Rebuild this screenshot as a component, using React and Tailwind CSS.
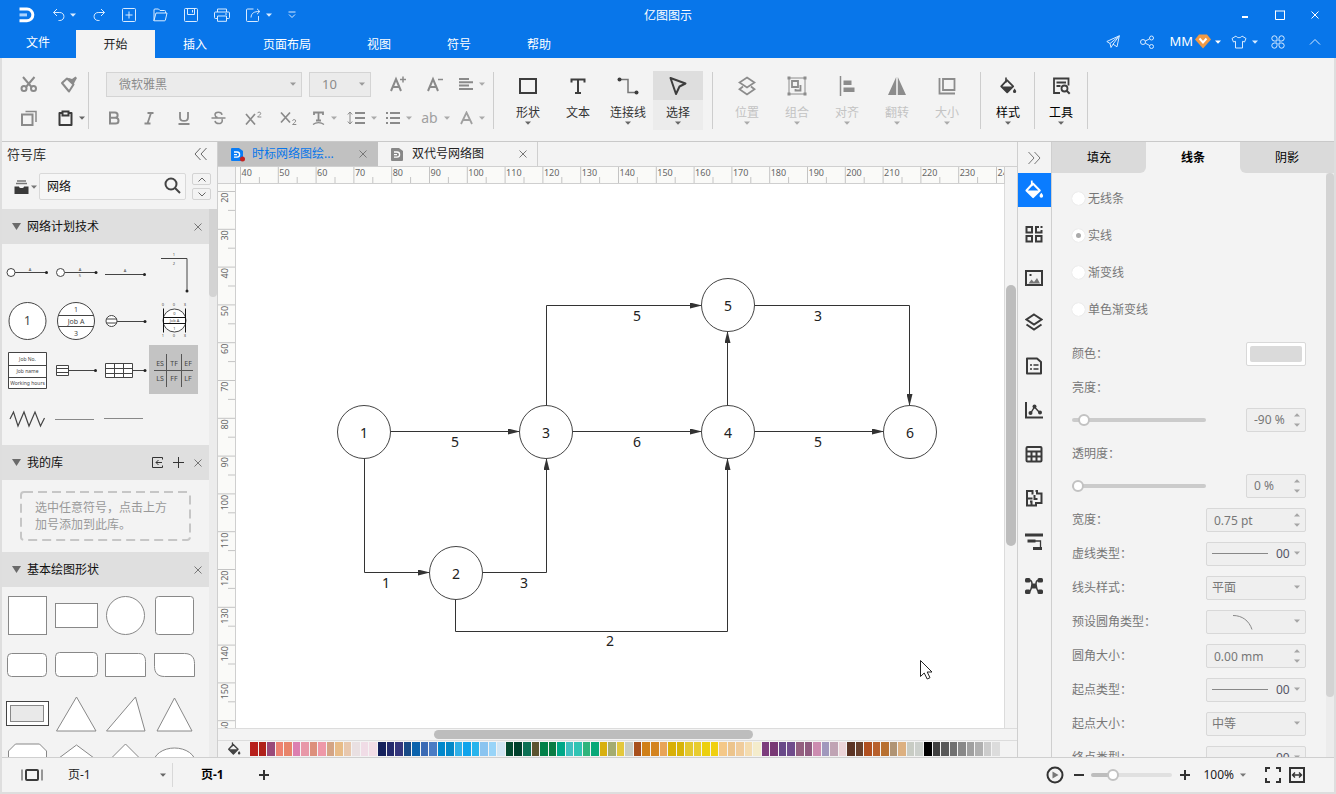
const Svg = ({ w = 16, h = w, sw = 1, className = '', children }) => (
    <svg
        width={w}
        height={h}
        viewBox={`0 0 ${w} ${h}`}
        fill="none"
        stroke="currentColor"
        strokeWidth={sw}
        className={`shrink-0 ${className}`}
        aria-hidden="true"
    >
        {children}
    </svg>
);

const Caret = ({ className = '' }) => (
    <Svg w={6} h={4} className={className}>
        <path d="M0 0.5h6L3 3.8z" fill="currentColor" stroke="none" />
    </Svg>
);

const Close = ({ className = 'text-[#777]' }) => (
    <Svg w={8} className={className}>
        <path d="M0.5 0.5l7 7M7.5 0.5l-7 7" />
    </Svg>
);

const Bucket = ({ w = 18, className = '' }) => (
    <svg width={w} height={w} viewBox="0 0 18 18" className={`shrink-0 ${className}`} fill="none" stroke="currentColor" aria-hidden="true">
        <path d="M7 0.5v5" strokeWidth="1.6" />
        <path d="M8 3.2L14.2 9.4 8.2 15.4 2.2 9.4z" strokeWidth="1.8" strokeLinejoin="round" />
        <path d="M2.2 9.4h12L8.2 15.6z" fill="currentColor" stroke="none" />
        <path d="M15.6 11.5c1 1.4 1.6 2.1 1.6 2.9a1.6 1.6 0 0 1-3.2 0c0-.8.6-1.5 1.6-2.9z" fill="currentColor" stroke="none" />
    </svg>
);

/* ---------- Title bar ---------- */

const MENU = [
    { name: '插入', cls: 'w-20' },
    { name: '页面布局', cls: 'w-[104px]' },
    { name: '视图', cls: 'w-20' },
    { name: '符号', cls: 'w-20' },
    { name: '帮助', cls: 'w-20' },
];

const Header = () => (
    <header className="shrink-0 bg-[#0876ea] text-white">
        <div className="grid h-[30px] grid-cols-[1fr_auto_1fr] items-center">
            <div className="flex items-center gap-4 pl-[18px] text-[#d8ebff]">
                <Svg w={18} sw={3} className="text-white">
                    <path d="M1.5 3h7.5a5.8 5.8 0 0 1 0 11.7H1.5" />
                    <path d="M1.5 8.9h7.5" className="text-[#a9d3ff]" />
                </Svg>
                <button aria-label="撤销" className="flex w-6 items-center justify-between">
                    <Svg w={14}>
                        <path d="M5 1L1.5 4.500 5 8M1.5 4.500h6.300c5.500 0 5.500 8 0 8H6.500" />
                    </Svg>
                    <Caret />
                </button>
                <button aria-label="重做">
                    <Svg w={14}>
                        <path d="M9 1l3.500 3.500L9 8M12.500 4.500H6.200c-5.500 0-5.500 8 0 8h1.300" />
                    </Svg>
                </button>
                <button aria-label="新建">
                    <Svg w={14}>
                        <rect x="0.5" y="0.5" width="13" height="13" rx="1" />
                        <path d="M7 3.5v7M3.5 7h7" />
                    </Svg>
                </button>
                <button aria-label="打开">
                    <Svg w={16} h={14}>
                        <path d="M2 12.5V2c0-.8.3-1 1-1h3.500l1.500 1.500h4.500c.8 0 1 .3 1 1V5M2 12.500L4 5h11l-1.600 7c-.1.600-.4.800-1 .800H2.600c-.6 0-.9-.3-.6-.8z" />
                    </Svg>
                </button>
                <button aria-label="保存">
                    <Svg w={14}>
                        <rect x="0.5" y="0.5" width="13" height="13" rx="1" />
                        <path d="M3.5 0.5v6h7v-6M8.5 2v2.5" />
                    </Svg>
                </button>
                <button aria-label="打印">
                    <Svg w={16} h={14}>
                        <path d="M3.500 4V1h9v3M3.500 10.500h-2c-.7 0-1-.3-1-1V5c0-.7.3-1 1-1h13c.7 0 1 .3 1 1v4.500c0 .7-.3 1-1 1h-2M3.500 8h9v5.300h-9zM11 6h2" />
                    </Svg>
                </button>
                <button aria-label="导出" className="flex w-[26px] items-center justify-between">
                    <Svg w={15} h={14}>
                        <path d="M7.500 1H1.500c-.7 0-1 .3-1 1v10.500c0 .7.300 1 1 1h10c.7 0 1-.3 1-1V8M5 9.500C5.300 5 8 3.500 13.500 3.500M11 0.800l2.800 2.700L11 6.200" />
                    </Svg>
                    <Caret />
                </button>
                <button aria-label="更多">
                    <Svg w={8} h={8}>
                        <path d="M0.5 1h7M1 3.5L4 6.5l3-3" />
                    </Svg>
                </button>
            </div>
            <h1 className="pt-px text-xs">亿图图示</h1>
            <div className="flex justify-end pr-1">
                <button aria-label="最小化" className="flex h-7 w-[35px] items-center justify-center">
                    <Svg w={10} sw={2}>
                        <path d="M2 7h6" />
                    </Svg>
                </button>
                <button aria-label="最大化" className="flex h-7 w-[35px] items-center justify-center">
                    <Svg w={10}>
                        <path d="M0.5 1h9M0.5 0.5v9h9v-9" />
                    </Svg>
                </button>
                <button aria-label="关闭" className="flex h-7 w-[35px] items-center justify-center">
                    <Close className="text-white" />
                </button>
            </div>
        </div>
        <nav className="flex h-7 items-end text-xs">
            <button className="h-7 w-[76px] pb-0.5">文件</button>
            <button className="h-7 w-[79px] bg-[#f3f3f3] pt-0.5 text-[#222]">开始</button>
            {MENU.map((m) => (
                <button key={m.name} className={`h-7 pt-0.5 ${m.cls}`}>
                    {m.name}
                </button>
            ))}
            <div className="ml-auto flex h-6 items-center self-start pr-[15px] text-[#d8ebff]">
                <button aria-label="发送" className="mr-5">
                    <Svg w={14}>
                        <path d="M13.300 0.800L0.800 6.500l3.200 2L13.300 0.800zM13.300 0.800l-2.300 11-4-2.600 6.300-8.400zM4 8.500l1 4 2-3.300" />
                    </Svg>
                </button>
                <button aria-label="分享" className="mr-3.5">
                    <Svg w={15} h={14}>
                        <circle cx="3" cy="7" r="2.5" />
                        <circle cx="11.5" cy="3" r="2" />
                        <circle cx="11.5" cy="11.5" r="2" />
                        <path d="M5.3 6l4.400-2.200M5.300 8.200l4.500 2.400" />
                    </Svg>
                </button>
                <button className="mr-2.5 flex items-center text-[13px] text-white">
                    MM
                    <Svg w={16} h={15} className="mr-1 ml-0.5">
                        <path d="M4 0.5h8l4 5-8 9-8-9z" fill="#f09a45" stroke="none" />
                        <path d="M4.500 4.500L8 8.500l3.500-4" stroke="#fff" strokeWidth="2" />
                    </Svg>
                    <Caret />
                </button>
                <button aria-label="主题" className="mr-[13px] flex items-center gap-[5px]">
                    <Svg w={16} h={14}>
                        <path d="M5 1L1 3.500 2.500 7 4.500 6.300V13h7V6.300l2 .7L15 3.500 11 1c-1 2.200-5 2.200-6 0z" strokeLinejoin="round" />
                    </Svg>
                    <Caret />
                </button>
                <button aria-label="应用" className="mr-6">
                    <Svg w={14}>
                        <path d="M6 6H3.300A2.600 2.600 0 1 1 6 3.300zM8 6V3.300A2.600 2.600 0 1 1 10.700 6zM6 8v2.700A2.600 2.600 0 1 1 3.300 8zM8 8h2.700A2.600 2.600 0 1 1 8 10.700z" />
                    </Svg>
                </button>
                <button aria-label="收起">
                    <Svg w={12} h={8}>
                        <path d="M1 6.5l5-5 5 5" />
                    </Svg>
                </button>
            </div>
        </nav>
    </header>
);

/* ---------- Ribbon ---------- */

const Divider = ({ className = '' }) => <div className={`mt-px h-[57px] w-px shrink-0 bg-[#cdcdcd] ${className}`} />;

const TextTool = ({ label, className = 'w-[35px]', caret, children }) => (
    <button aria-label={label} className={`flex h-[26px] items-center justify-center gap-1.5 ${className}`}>
        {children}
        {caret && <Caret className="text-[#aaa]" />}
    </button>
);

const BigTool = ({ label, caret = true, active, muted, dark, children }) => (
    <button className={`flex h-[59px] w-[50px] shrink-0 flex-col items-center ${active ? 'bg-[#ececec]' : ''}`}>
        <span
            className={`flex h-[29px] w-full items-center justify-center ${active ? 'bg-[#dedede]' : ''} ${muted ? 'text-[#8c8c8c]' : 'text-[#3d3d3d]'}`}
        >
            {children}
        </span>
        <span className={`mt-[5px] text-xs leading-4 ${muted ? 'text-[#c3c3c3]' : dark ? 'text-black' : 'text-[#333]'}`}>{label}</span>
        {caret && <Caret className={muted ? 'text-[#aaa]' : 'text-[#666]'} />}
    </button>
);

const Ribbon = () => (
    <div className="flex h-[84px] shrink-0 items-start overflow-hidden border-b border-[#c9c9c9] pt-[13px] pl-[7px] text-[#8a8a8a]">
        <div className="grid grid-cols-[40px_39px] gap-y-2">
            <TextTool label="剪切" className="w-10">
                <Svg w={18} h={16} sw={2}>
                    <path d="M3 1l8.500 10M14.500 1L6 11" />
                    <circle cx="4" cy="12.5" r="2.5" />
                    <circle cx="13.5" cy="12.5" r="2.5" />
                </Svg>
            </TextTool>
            <TextTool label="格式刷" className="w-10">
                <Svg w={18} h={17} sw={2}>
                    <path d="M2 7l5-4.500 6.500 6-4.500 7z" strokeLinejoin="round" />
                    <path d="M7 2.500l6.500 6 1.500-3 2-3.500-1.500-1.500-3.500 2.500L9 2z" fill="currentColor" stroke="none" />
                </Svg>
            </TextTool>
            <TextTool label="复制" className="w-10">
                <Svg w={16} sw={2}>
                    <rect x="1" y="4.5" width="10.5" height="10.5" />
                    <path d="M4.5 1.5h10.500V12" strokeWidth="1.5" />
                </Svg>
            </TextTool>
            <button aria-label="粘贴" className="flex h-[26px] w-10 items-center justify-end gap-1.5 text-[#3a3a3a]">
                <Svg w={15} h={16} sw={2}>
                    <path d="M4 3H1.500v12h12V3H11" strokeLinejoin="round" />
                    <path d="M4.500 1.500h6v4h-6z" />
                </Svg>
                <Caret className="mr-1 text-[#666]" />
            </button>
        </div>
        <Divider />
        <div className="ml-[7px] flex shrink-0 flex-col gap-2">
            <div className="flex h-[26px] items-center pl-[10px]">
                <div className="relative mr-[7px]">
                    <select
                        aria-label="字体"
                        className="h-[25px] w-[196px] appearance-none border border-[#d4d4d4] bg-[#ebebeb] pl-3 text-xs text-[#8c8c8c]"
                    >
                        <option>微软雅黑</option>
                    </select>
                    <Caret className="pointer-events-none absolute top-[11px] right-1.5 text-[#9a9a9a]" />
                </div>
                <div className="relative mr-2">
                    <select
                        aria-label="字号"
                        className="h-[25px] w-[62px] appearance-none border border-[#d4d4d4] bg-[#ebebeb] pl-3 text-[13px] text-[#8c8c8c]"
                    >
                        <option>10</option>
                    </select>
                    <Caret className="pointer-events-none absolute top-[11px] right-1.5 text-[#9a9a9a]" />
                </div>
                <TextTool label="增大字号" className="w-[37px]">
                    <Svg w={18} h={16} sw={2}>
                        <path d="M2 15L7 3l5 12M4 11h6" />
                        <path d="M11 3.500h6M14 0.500v6" strokeWidth="1.5" />
                    </Svg>
                </TextTool>
                <TextTool label="减小字号" className="w-[37px]">
                    <Svg w={18} h={16} sw={2}>
                        <path d="M2 15L7 3l5 12M4 11h6" />
                        <path d="M12 3.5h5" strokeWidth="1.5" />
                    </Svg>
                </TextTool>
                <TextTool label="对齐方式" className="w-[37px]" caret>
                    <Svg w={14} sw={2}>
                        <path d="M0 2h10M0 5.300h14M0 8.600h10M0 12h14" />
                    </Svg>
                </TextTool>
            </div>
            <div className="flex">
                <TextTool label="加粗">
                    <Svg w={12} h={14} sw={2}>
                        <path d="M2 1.500h5c3.500 0 3.500 5.300 0 5.300H2zM2 6.800h5.500c4 0 4 5.700 0 5.700H2z" />
                    </Svg>
                </TextTool>
                <TextTool label="斜体">
                    <Svg w={12} h={14} sw={2}>
                        <path d="M4.500 2h6M1.500 12.500h6M8 2L4.500 12.500" strokeWidth="1.8" />
                    </Svg>
                </TextTool>
                <TextTool label="下划线">
                    <Svg w={12} h={14} sw={2}>
                        <path d="M2 1v5.500c0 4.600 8 4.600 8 0V1M0.500 13h11" strokeWidth="1.8" />
                    </Svg>
                </TextTool>
                <TextTool label="删除线">
                    <Svg w={15} h={14} sw={2}>
                        <path
                            d="M11 3.800C10.500 0.500 4 0.500 4 3.800c0 1.500 1 2.200 2.500 2.700M4 9.800c.5 3.700 7.300 3.700 7.300 0 0-.7-.2-1.300-.6-1.700M0.500 7h14"
                            strokeWidth="1.5"
                        />
                    </Svg>
                </TextTool>
                <TextTool label="上标">
                    <Svg w={17} h={14} sw={2}>
                        <path d="M1 3l9 10.500M10 3L1 13.500" strokeWidth="1.7" />
                        <path d="M12.500 2.200c.3-1.500 3.200-1.500 3.200.2 0 1.200-2 2.200-3.100 3.600h3.700" strokeWidth="1" />
                    </Svg>
                </TextTool>
                <TextTool label="下标">
                    <Svg w={17} h={14} sw={2}>
                        <path d="M1 1.500l9 10M10 1.500L1 11.500" strokeWidth="1.7" />
                        <path d="M12.500 9.700c.3-1.500 3.200-1.500 3.200.2 0 1.200-2 2.200-3.100 3.600h3.700" strokeWidth="1" />
                    </Svg>
                </TextTool>
                <TextTool label="文字方向" className="w-[37px]" caret>
                    <Svg w={13} h={14} sw={2}>
                        <path d="M2 4V1.500h9V4M6.500 1.500v8M4 9.500h5" strokeWidth="1.8" />
                        <path d="M1 13.500c3-2.500 8-2.500 11 0" strokeWidth="1.2" />
                    </Svg>
                </TextTool>
                <TextTool label="行距" className="w-[37px]" caret>
                    <Svg w={18} h={14} sw={2}>
                        <path d="M3 1.500v11M0.800 3.500L3 1l2.200 2.500M0.800 10.500L3 13l2.200-2.500" strokeWidth="1" />
                        <path d="M8 2h10M8 7h10M8 12h10" />
                    </Svg>
                </TextTool>
                <TextTool label="项目符号" className="w-[37px]" caret>
                    <Svg w={14} sw={2}>
                        <path d="M4 2h10M4 7h10M4 12h10M0 2h2M0 7h2M0 12h2" />
                    </Svg>
                </TextTool>
                <TextTool label="大小写" className="w-[37px]" caret>
                    <span className="text-sm text-[#a0a0a0]">ab</span>
                </TextTool>
                <TextTool label="字体颜色" className="w-[37px]" caret>
                    <Svg w={13} h={14} sw={2} className="text-[#a0a0a0]">
                        <path d="M1 13L6.500 1.500 12 13M3 9h7" strokeWidth="1.8" />
                    </Svg>
                </TextTool>
            </div>
        </div>
        <Divider className="ml-0.5" />
        <div className="ml-[9px] flex">
            <BigTool label="形状">
                <Svg w={20} sw={2}>
                    <rect x="2" y="3" width="16" height="14" />
                </Svg>
            </BigTool>
            <BigTool label="文本" caret={false}>
                <Svg w={18} sw={2}>
                    <path d="M2.500 5.500V2.500h13v3M9 2.500v13.500M6 16h6" />
                </Svg>
            </BigTool>
            <BigTool label="连接线">
                <Svg w={22} h={18} sw={1.5}>
                    <path d="M3 2.500h8v13h8" className="text-[#777]" />
                    <circle cx="2.5" cy="2.5" r="2" fill="currentColor" stroke="none" />
                    <circle cx="19.5" cy="15.5" r="2" fill="currentColor" stroke="none" />
                </Svg>
            </BigTool>
            <BigTool label="选择" active>
                <Svg w={20} sw={2}>
                    <path d="M2.500 2l15 5.500-6 3L8 18z" strokeLinejoin="round" />
                </Svg>
            </BigTool>
        </div>
        <Divider className="ml-[9px]" />
        <div className="ml-[9px] flex">
            <BigTool label="位置" muted>
                <Svg w={18} h={20} sw={1.8}>
                    <path d="M9 1.500l7.500 5L9 11.500l-7.500-5zM5 10.500l-3.500 2.700L9 18.500l7.500-5.300L13 10.500" />
                </Svg>
            </BigTool>
            <BigTool label="组合" muted>
                <Svg w={20}>
                    <path d="M2 2h16v16H2z" />
                    <path d="M0.500 0.500h3v3h-3zM16.500 0.500h3v3h-3zM0.500 16.500h3v3h-3zM16.500 16.500h3v3h-3z" fill="currentColor" stroke="none" />
                    <path d="M5 5h6v6H5zM13.500 9v5.500H8.500v-1.500" strokeWidth="1.8" />
                </Svg>
            </BigTool>
            <BigTool label="对齐" muted>
                <Svg w={16} h={20}>
                    <path d="M1.500 0v20" strokeWidth="1.5" />
                    <path d="M4.500 4.500h8v4.500h-8zM4.500 11.500h11V16h-11z" fill="currentColor" stroke="none" />
                </Svg>
            </BigTool>
            <BigTool label="翻转" muted>
                <Svg w={18} h={20}>
                    <path d="M8.200 1v18H0zM9.800 1v18H18z" fill="currentColor" stroke="none" />
                </Svg>
            </BigTool>
            <BigTool label="大小" muted>
                <Svg w={18} sw={1.8}>
                    <path d="M1.500 1v15.500H17" />
                    <path d="M5 2h11.500v11H5z" />
                </Svg>
            </BigTool>
        </div>
        <Divider className="ml-2" />
        <div className="pr-px pl-0.5">
            <BigTool label="样式" dark>
                <Bucket w={18} />
            </BigTool>
        </div>
        <Divider />
        <div className="px-px">
            <BigTool label="工具" dark>
                <Svg w={19} h={18} sw={2}>
                    <path d="M8 16H2V1.500h14.500v7M4.500 5.500h9.500M4.500 9h4" strokeWidth="1.8" />
                    <circle cx="12.5" cy="11.5" r="3" strokeWidth="1.8" />
                    <path d="M14.700 13.700l3 3" />
                </Svg>
            </BigTool>
        </div>
        <Divider />
    </div>
);

/* ---------- Symbol library ---------- */

const T = ({ x, y, s = 4, children }) => (
    <text x={x} y={y} fontSize={s} textAnchor="middle" fill="#444" stroke="none">
        {children}
    </text>
);

const Dot = ({ x, y }) => <circle cx={x} cy={y} r="1.5" fill="#222" stroke="none" />;

const NETWORK_SHAPES = [
    <>
        <circle cx="9" cy="25.5" r="4" fill="#fff" />
        <path d="M13 25.5h31" />
        <Dot x="44.5" y="25.5" />
        <T x="28" y="24">A</T>
    </>,
    <>
        <circle cx="9.5" cy="25.5" r="4" fill="#fff" />
        <path d="M14 25.5h31" />
        <Dot x="45" y="25.5" />
        <T x="29" y="24">A</T>
        <T x="29" y="30">5</T>
    </>,
    <>
        <path d="M5 27.5h39" />
        <Dot x="44.5" y="27.5" />
        <T x="25" y="25">A</T>
    </>,
    <>
        <path d="M12 11.5h26v32" />
        <Dot x="38" y="44" />
        <T x="25" y="9">1</T>
        <T x="25" y="18">2</T>
    </>,
    <>
        <circle cx="25.5" cy="25" r="18.5" fill="#fff" />
        <T x="25.5" y="29" s={12}>1</T>
    </>,
    <>
        <circle cx="25" cy="25" r="18.5" fill="#fff" />
        <path d="M7.5 19.5h35M7.5 30.5h35" />
        <T x="25" y="16" s={7}>1</T>
        <T x="25" y="28" s={7}>Job A</T>
        <T x="25" y="40" s={7}>3</T>
    </>,
    <>
        <circle cx="11.5" cy="25" r="5.5" fill="#fff" />
        <path d="M6.5 23H17M6.500 27H17M17 25.500h28" />
        <Dot x="45" y="25.5" />
    </>,
    <>
        <circle cx="25.5" cy="24.5" r="11.5" fill="#fff" />
        <path d="M14.500 12.500v24M36.500 12.500v24M14.500 21.500h22M14.500 27.500h22" stroke="#111" />
        <T x="14" y="10">0</T>
        <T x="25" y="10">0</T>
        <T x="36" y="10">3</T>
        <T x="25.5" y="19">0</T>
        <T x="25.5" y="26">Job A</T>
        <T x="25.5" y="34">1</T>
        <T x="14" y="41">1</T>
        <T x="25" y="41">0</T>
        <T x="36" y="41">3</T>
    </>,
    <>
        <path d="M6.500 7.500h38v36h-38zM6.500 20.500h38M6.500 32.500h38" fill="#fff" />
        <T x="25.5" y="16" s={5}>Job No.</T>
        <T x="25.5" y="28" s={5}>Job name</T>
        <T x="25.5" y="40" s={5}>Working hours</T>
    </>,
    <>
        <path d="M5.500 20.500h12v10h-12zM5.500 23.500h12M5.500 27.500h12" fill="#fff" />
        <path d="M18 25.5h26" />
        <Dot x="44.5" y="25.5" />
    </>,
    <>
        <path d="M5.500 18.500h27v14h-27zM5.500 23.500h27M5.500 28.500h27M14.500 18.500v14M23.500 18.500v14" fill="#fff" />
        <path d="M33 25.5h12" />
        <Dot x="45" y="25.5" />
    </>,
    <>
        <path d="M5 25.500h39M17.500 9v33M32.500 9v33" stroke="#555" />
        <T x="11" y="21" s={7}>ES</T>
        <T x="25" y="21" s={7}>TF</T>
        <T x="39" y="21" s={7}>EF</T>
        <T x="11" y="36" s={7}>LS</T>
        <T x="25" y="36" s={7}>FF</T>
        <T x="39" y="36" s={7}>LF</T>
    </>,
    <path d="M8 25l3.500-7 4.500 14 6-14 5 14 6-14 5.500 14 4-8" strokeWidth="1.2" />,
    <path d="M4 25.5h39" stroke="#888" />,
    <path d="M4 24.5h39" stroke="#888" />,
];

const BASIC_SHAPES = [
    <rect x="6.5" y="5.5" width="38" height="38" />,
    <rect x="4.5" y="12.5" width="42" height="24" />,
    <circle cx="25.5" cy="24.5" r="19" />,
    <rect x="6.5" y="5.5" width="38" height="38" rx="3" />,
    <rect x="5.5" y="13.5" width="39" height="23" rx="4" />,
    <rect x="4.5" y="12.5" width="42" height="24" rx="4" />,
    <path d="M5.500 13.500h33c5 0 7 3 7 8v15h-40z" />,
    <path d="M5.500 13.500h30c7 0 10 4 10 10v13h-30c-7 0-10-4-10-10z" />,
    <>
        <rect x="4.5" y="12.5" width="42" height="24" stroke="#444" />
        <rect x="8.5" y="16.5" width="33" height="16" fill="#e9e9e9" />
    </>,
    <path d="M25.500 8l19.500 34H5.500z" />,
    <path d="M35.500 8l9.500 34H6.500z" />,
    <path d="M25.500 9l17.500 33H8z" />,
    <path d="M6.500 45V13l7-7h24l7 7v32z" />,
    <path d="M25.500 7L47 23 25.500 40 4 23z" />,
    <path d="M25.500 6l19 19-19 19-19-19z" />,
    <ellipse cx="25.5" cy="25" rx="21" ry="15" />,
];

const ShapeGrid = ({ shapes, selected, basic }) => (
    <div className="grid w-[196px] grid-cols-4">
        {shapes.map((shape, i) => (
            <button key={i} aria-label={`形状 ${i + 1}`} className={`h-[49px] ${i === selected ? 'bg-[#c3c3c3]' : ''}`}>
                <svg width="49" height="49" viewBox="0 0 49 49" fill={basic ? '#fff' : 'none'} stroke={basic ? '#888' : '#444'}>
                    {shape}
                </svg>
            </button>
        ))}
    </div>
);

const Section = ({ title, actions, bodyClass, children }) => (
    <section className="shrink-0">
        <div className="flex h-[35px] items-center bg-[#dfdfdf] pr-[7px] pl-[10px]">
            <Svg w={9} h={7} className="mr-1.5 text-[#6a6a6a]">
                <path d="M0 0h9L4.5 7z" fill="currentColor" stroke="none" />
            </Svg>
            <h2 className="mr-auto text-xs text-[#111]">{title}</h2>
            {actions}
            <button aria-label="关闭">
                <Close />
            </button>
        </div>
        <div className={bodyClass}>{children}</div>
    </section>
);

const Library = () => (
    <aside className="flex w-[216px] shrink-0 flex-col overflow-hidden border-r border-[#cfcfcf]">
        <div className="flex h-[31px] shrink-0 items-center justify-between pr-[9px] pb-2 pl-[5px]">
            <h2 className="text-[13px] leading-4 text-[#333]">符号库</h2>
            <button aria-label="折叠">
                <Svg w={14} className="text-[#666]">
                    <path d="M6.5 1L1 7l5.500 6M12.500 1L7 7l5.500 6" />
                </Svg>
            </button>
        </div>
        <div className="mb-[9px] flex h-[27px] shrink-0 items-center pr-1.5 pl-3">
            <button aria-label="符号分类" className="flex w-[25px] items-center gap-0.5">
                <Svg w={15} h={14} className="text-[#3a3a3a]">
                    <path d="M3 1h9M2 3.500h11" strokeWidth="1.5" className="text-[#777]" />
                    <path d="M0.500 6.500h4.500c0 2 5 2 5 0h4.500V14h-14z" fill="currentColor" stroke="none" />
                </Svg>
                <Caret className="text-[#777]" />
            </button>
            <div className="relative mr-1.5 flex-1">
                <input
                    aria-label="搜索符号"
                    defaultValue="网络"
                    className="block h-[27px] w-full rounded-xs border border-[#d9d9d9] bg-[#f6f6f6] pb-0.5 pl-[7px] text-xs text-[#111] outline-none"
                />
                <Svg w={17} sw={2} className="absolute top-1 right-[5px] text-[#444]">
                    <circle cx="7" cy="7" r="5.5" />
                    <path d="M11 11l5 5" />
                </Svg>
            </div>
            <div className="flex flex-col gap-[3px] text-[#666]">
                <button aria-label="上一个" className="flex h-3 w-[19px] items-center justify-center rounded-xs border border-[#d3d3d3]">
                    <Svg w={8} h={5}>
                        <path d="M0.5 4.500L4 1l3.500 3.500" />
                    </Svg>
                </button>
                <button aria-label="下一个" className="flex h-3 w-[19px] items-center justify-center rounded-xs border border-[#d3d3d3]">
                    <Svg w={8} h={5}>
                        <path d="M0.5 0.500L4 4l3.500-3.500" />
                    </Svg>
                </button>
            </div>
        </div>
        <div className="flex min-h-0 flex-1">
            <div className="flex flex-1 flex-col overflow-hidden">
                <Section title="网络计划技术" bodyClass="h-[201px] pt-[3px]">
                    <ShapeGrid shapes={NETWORK_SHAPES} selected={11} />
                </Section>
                <Section
                    title="我的库"
                    bodyClass="px-[19px] py-3"
                    actions={
                        <>
                            <button aria-label="导入" className="mr-2.5">
                                <Svg w={11} className="text-[#333]">
                                    <path d="M10.500 2.500v-2H0.500v10h10v-2M10 5.500H4M6.500 3L4 5.500 6.500 8" />
                                </Svg>
                            </button>
                            <button aria-label="添加" className="mr-2.5">
                                <Svg w={11} className="text-[#333]">
                                    <path d="M5.5 0v11M0 5.500h11" />
                                </Svg>
                            </button>
                        </>
                    }
                >
                    <p className="relative h-12 px-3.5 pt-[7px] text-xs leading-[17px] text-[#999]">
                        选中任意符号，点击上方加号添加到此库。
                        <svg className="absolute inset-0 h-full w-full overflow-visible" fill="none" stroke="#c6c6c6" strokeWidth="2" aria-hidden="true">
                            <rect width="100%" height="100%" rx="3" strokeDasharray="9 5" />
                        </svg>
                    </p>
                </Section>
                <Section title="基本绘图形状" bodyClass="pt-1">
                    <ShapeGrid shapes={BASIC_SHAPES} basic />
                </Section>
            </div>
            <div className="w-2 shrink-0 bg-[#ececec]">
                <div className="h-[88px] rounded-b bg-[#d3d3d3]" />
            </div>
        </div>
    </aside>
);

/* ---------- Canvas ---------- */

const STEP = 37.8;
const H_TICKS = Array.from({ length: 21 }, (_, i) => ({ v: 40 + i * 10, p: 4.5 + i * STEP }));
const V_TICKS = Array.from({ length: 15 }, (_, i) => ({ v: 20 + i * 10, p: 7.5 + i * STEP }));

const NODES = [
    { id: 1, x: 128, y: 248 },
    { id: 2, x: 220, y: 389 },
    { id: 3, x: 310, y: 248 },
    { id: 4, x: 492, y: 248 },
    { id: 5, x: 492, y: 121 },
    { id: 6, x: 674, y: 248 },
];

const EDGES = [
    { d: 'M128.5 247.5H284', label: 5, x: 219, y: 263 },
    { d: 'M310.5 247.5H466', label: 6, x: 401, y: 263 },
    { d: 'M491.5 247.5H648', label: 5, x: 582, y: 263 },
    { d: 'M310.5 247.5V121.5H466', label: 5, x: 401, y: 137 },
    { d: 'M491.5 121.5H673.5V222', label: 3, x: 582, y: 137 },
    { d: 'M491.5 247.5V147' },
    { d: 'M128.5 247.5V388.5H194', label: 1, x: 150, y: 404 },
    { d: 'M219.5 388.5H310.5V274', label: 3, x: 288, y: 404 },
    { d: 'M219.5 388.5V447.5H491.5V274', label: 2, x: 374, y: 462 },
];

const Diagram = () => (
    <svg className="h-full w-full" aria-label="双代号网络图">
        <defs>
            <marker id="arrow" viewBox="0 0 12 6" refX="12" refY="3" markerWidth="12" markerHeight="6" markerUnits="userSpaceOnUse" orient="auto">
                <path d="M0 0L12 3L0 6z" fill="#333" />
            </marker>
        </defs>
        {EDGES.map((e) => (
            <g key={e.d}>
                <path d={e.d} fill="none" stroke="#333" markerEnd="url(#arrow)" />
                {e.label && (
                    <text x={e.x} y={e.y} fontSize="14" textAnchor="middle" fill="#222">
                        {e.label}
                    </text>
                )}
            </g>
        ))}
        {NODES.map((n) => (
            <g key={n.id}>
                <circle cx={n.x} cy={n.y} r="26.5" fill="#fff" stroke="#444" />
                <text x={n.x} y={n.y + 6} fontSize="14" textAnchor="middle" fill="#222">
                    {n.id}
                </text>
            </g>
        ))}
        {/* mouse pointer */}
        <path d="M684.5 476.500v16l3.700-3.500 3 6 2.800-1.300-2.800-5.700h4.800z" fill="#fff" stroke="#222" />
    </svg>
);

const PALETTE = [
    '#b71f1b', '#b0211a', '#9a4a7a', '#ee8270', '#e8846a', '#dc7fb0', '#e898a8', '#dd907c', '#ee98a8', '#d4a484', '#e8bc88', '#e8c8ae',
    '#e9e0e2', '#f0dce6', '#f2dde6', '#14205c', '#232a6c', '#34367c', '#184a86', '#0a62ac', '#3a6ab4', '#4a7cc4', '#0088cc', '#0488c8',
    '#30b0e8', '#10a4ec', '#28b4ec', '#8ac4f0', '#98d4f8', '#d2e6f4', '#044a30', '#00402c', '#0c7054', '#5c5430', '#008048', '#0a7c44',
    '#00a888', '#40c0c0', '#30c4b4', '#30b47c', '#08a878', '#d8b010', '#a4ac70', '#e4c83c', '#c8ccc4', '#a8501c', '#d08018', '#d48420',
    '#e8a458', '#d8b008', '#d8b408', '#e4c830', '#e8cc30', '#ecd010', '#f0d010', '#f4c888', '#ecc48c', '#f0cc9c', '#f4dcb0', '#f4eccc',
    '#7c3c7c', '#783874', '#684888', '#704c8c', '#946080', '#905c80', '#cc8cb0', '#a098bc', '#c0a4b4', '#ecd4d8', '#5c3424', '#68402c',
    '#b05020', '#b8602c', '#b87030', '#b09474', '#dcb080', '#c8ccc4', '#ccd0cc', '#000000', '#404040', '#585858', '#707070', '#888888',
    '#a0a0a0', '#b0b0b0', '#cccccc', '#dcdcdc',
];

const DocTab = ({ name, active }) => (
    <div
        className={`flex w-40 items-center border-r pr-2.5 pl-3 ${active ? 'border-[#c1c1c1] bg-[#c1c1c1] text-[#0876ea]' : 'border-[#cfcfcf] text-[#222]'}`}
    >
        <Svg w={15} className="mr-[7px]">
            <path d="M1 2a1 1 0 0 1 1-1h7l4 3v9a1 1 0 0 1-1 1H2a1 1 0 0 1-1-1z" fill={active ? '#0a7cf5' : '#888'} stroke="none" />
            <path d="M4 5h3a2.600 2.600 0 0 1 0 5.200H4M4 7.600h3" stroke="#fff" strokeWidth="1.3" />
            {active && <circle cx="12.5" cy="12" r="2.5" fill="#c5221f" stroke="none" />}
        </Svg>
        <a href="#doc" className="mr-auto text-xs leading-4">
            {name}
        </a>
        <button aria-label={`关闭 ${name}`}>
            <Close />
        </button>
    </div>
);

const Canvas = () => (
    <main className="flex min-w-0 flex-1 flex-col">
        <div className="flex h-[25px] shrink-0 border-b border-[#d0d0d0]">
            <DocTab name="时标网络图绘..." active />
            <DocTab name="双代号网络图" />
        </div>
        <div className="flex h-[17px] shrink-0">
            <div className="w-[18px] shrink-0 border-r border-b border-[#cfcfcf]" />
            <svg className="h-full min-w-0 flex-1 border-b border-[#cfcfcf] bg-[#fafaf8]" stroke="#c4c4c4" aria-hidden="true">
                {H_TICKS.map((t) => (
                    <g key={t.v}>
                        <path d={`M${t.p} 0V17M${t.p + STEP / 2} 10V17`} />
                        <text x={t.p + 1} y="9" fontSize="9" fill="#666" stroke="none">
                            {t.v}
                        </text>
                    </g>
                ))}
            </svg>
            <div className="w-[13px] shrink-0 border-l border-[#cfcfcf]" />
        </div>
        <div className="flex min-h-0 flex-1">
            <svg className="h-full w-[18px] shrink-0 border-r border-[#cfcfcf] bg-[#fafaf8]" stroke="#c4c4c4" aria-hidden="true">
                {V_TICKS.map((t) => (
                    <g key={t.v}>
                        <path d={`M0 ${t.p}H18M10 ${t.p + STEP / 2}H18`} />
                        <text transform={`translate(10 ${t.p + 1}) rotate(-90)`} fontSize="9" textAnchor="end" fill="#666" stroke="none">
                            {t.v}
                        </text>
                    </g>
                ))}
            </svg>
            <div className="min-w-0 flex-1 bg-white">
                <Diagram />
            </div>
            <div className="w-[13px] shrink-0 border-l border-[#dcdcdc] pt-[101px] pr-px pl-px">
                <div className="h-[261px] rounded-full bg-[#bdbdbd]" />
            </div>
        </div>
        <div className="h-[13px] shrink-0 border-y border-[#dcdcdc] py-px">
            <div className="ml-[27%] h-full w-[40%] rounded-full bg-[#bdbdbd]" />
        </div>
        <div className="flex h-4 shrink-0 items-center">
            <button aria-label="填充颜色" className="flex w-8 justify-center text-[#444]">
                <Bucket w={14} />
            </button>
            <div className="mr-[17px] flex h-3.5 flex-1 gap-px">
                {PALETTE.map((c, i) => (
                    <button key={i} aria-label={c} className="min-w-0 flex-1" style={{ backgroundColor: c }} />
                ))}
            </div>
        </div>
    </main>
);

/* ---------- Right side ---------- */

const STRIP = [
    {
        name: '主题',
        icon: (
            <Svg w={18} sw={2}>
                <path d="M1.500 2h5.500v5.500H1.500zM1.500 11h5.500v5.500H1.500zM11 11h5.500v5.500H11zM14 2h-3v5.500h5.500V5" />
                <path d="M15.500 1h2v2h-2z" fill="currentColor" stroke="none" />
            </Svg>
        ),
    },
    {
        name: '图片',
        icon: (
            <Svg w={18} sw={2}>
                <rect x="1" y="2" width="16" height="14" />
                <path d="M3.500 14.500l3-4 2.500 2.500 3-4 3 5.500z" fill="currentColor" stroke="none" className="text-[#777]" />
                <path d="M4.500 5h2v2h-2z" fill="currentColor" stroke="none" />
            </Svg>
        ),
    },
    {
        name: '图层',
        icon: (
            <Svg w={18} sw={2}>
                <path d="M9 1.500l7.500 5L9 11.500l-7.500-5zM1.500 11.500L9 16.500l7.500-5" />
            </Svg>
        ),
    },
    {
        name: '页面',
        icon: (
            <Svg w={18} sw={2}>
                <path d="M2 1.500h10l4 3.500v11.500H2z" strokeLinejoin="round" />
                <path d="M5 8h2M5 12h2M8.500 8h5M8.500 12h5" strokeWidth="1.6" />
            </Svg>
        ),
    },
    {
        name: '图表',
        icon: (
            <Svg w={18} sw={2}>
                <path d="M1 1v15.500h17" />
                <path d="M5.500 12.500L9.500 6l5 5.500" strokeWidth="1.4" />
                <circle cx="5.5" cy="12" r="2" fill="currentColor" stroke="none" />
                <circle cx="9.5" cy="5.5" r="2" fill="currentColor" stroke="none" />
                <circle cx="15" cy="11.5" r="2" fill="currentColor" stroke="none" />
            </Svg>
        ),
    },
    {
        name: '表格',
        icon: (
            <Svg w={18} sw={2}>
                <rect x="1.5" y="2" width="15" height="14.5" rx="1" />
                <path d="M1.500 6.500h15M1.500 11.500h15M6.500 6.500v10M11.500 6.500v10" />
            </Svg>
        ),
    },
    {
        name: '平面图',
        icon: (
            <Svg w={18} sw={2}>
                <path d="M7.500 5.500V2H2v14.500h9V14h5.500V4.500H12V2h-1.500M2 9.500h4.500v-1M9.500 6v4h3M6.500 16.500v-4H5" />
            </Svg>
        ),
    },
    {
        name: '甘特图',
        icon: (
            <Svg w={18} sw={3}>
                <path d="M0 2h18M2.500 8h8M8 15.500h9" />
                <path d="M10 8h5.500v6" strokeWidth="1.3" />
            </Svg>
        ),
    },
    {
        name: '思维导图',
        icon: (
            <Svg w={18}>
                <path d="M3 3.500h2c4 0 1 11 -1 11H3M15 3.500h-2c-4 0-1 11 1 11h1M6 9h6" strokeWidth="1.5" />
                <path d="M7 6.500h4v5H7z" fill="currentColor" stroke="none" />
                <rect x="0" y="1" width="5.5" height="4.5" rx="1.5" fill="currentColor" stroke="none" />
                <rect x="12.5" y="1" width="5.5" height="4.5" rx="1.5" fill="currentColor" stroke="none" />
                <rect x="0" y="12.5" width="5.5" height="4.5" rx="1.5" fill="currentColor" stroke="none" />
                <rect x="12.5" y="12.5" width="5.5" height="4.5" rx="1.5" fill="currentColor" stroke="none" />
            </Svg>
        ),
    },
];

const Strip = () => (
    <div className="flex w-[34px] shrink-0 flex-col gap-2.5 border-l border-[#cfcfcf] text-[#3a3a3a]">
        <div className="flex flex-col">
            <button aria-label="展开" className="flex h-[31px] items-center justify-center pr-0.5 text-[#777]">
                <Svg w={14}>
                    <path d="M1.500 1L7 7l-5.500 6M7.500 1L13 7l-5.500 6" />
                </Svg>
            </button>
            <button aria-label="填充" className="flex h-[34px] items-center justify-center bg-[#0a7cff] pr-0.5 text-white">
                <Bucket w={20} />
            </button>
        </div>
        {STRIP.map((s) => (
            <button key={s.name} aria-label={s.name} className="flex h-[34px] shrink-0 items-center justify-center pr-0.5">
                {s.icon}
            </button>
        ))}
    </div>
);

const RADIOS = ['无线条', '实线', '渐变线', '单色渐变线'];

const Spinner = ({ id, value, label, className = 'w-[100px]' }) => (
    <div className={`relative ${className}`}>
        <input
            id={id}
            aria-label={label}
            defaultValue={value}
            className="block h-6 w-full rounded-xs border border-[#d8d8d8] bg-[#efefef] pl-[7px] text-xs text-[#777] outline-none"
        />
        <div className="absolute inset-y-0 right-1.5 flex flex-col justify-center gap-1.5 text-[#a5a5a5]">
            <button aria-label="增加">
                <Caret className="rotate-180" />
            </button>
            <button aria-label="减少">
                <Caret />
            </button>
        </div>
    </div>
);

const Dropdown = ({ id, value, drawing, end }) => (
    <div className="relative w-[100px]">
        <select
            id={id}
            className={`block h-6 w-full appearance-none rounded-xs border border-[#d8d8d8] bg-[#efefef] text-xs ${end ? 'pl-[69px] text-[#556]' : 'pl-[5px] text-[#777]'}`}
        >
            <option>{value}</option>
        </select>
        {drawing && <div className="pointer-events-none absolute inset-y-0 left-1.5 flex items-center text-[#888]">{drawing}</div>}
        <Caret className="pointer-events-none absolute top-[9px] right-1.5 text-[#a5a5a5]" />
    </div>
);

const LinePreview = () => (
    <Svg w={56} h={2}>
        <path d="M0 0.5h56" />
    </Svg>
);

const ArcPreview = () => (
    <Svg w={44} h={16}>
        <path d="M21 1.500c9 0 16 5 19 14" />
    </Svg>
);

const FIELDS = [
    { id: 'width', label: '宽度：', control: <Spinner id="width" value="0.75 pt" /> },
    { id: 'dash', label: '虚线类型：', control: <Dropdown id="dash" value="00" end drawing={<LinePreview />} /> },
    { id: 'cap', label: '线头样式：', control: <Dropdown id="cap" value="平面" /> },
    { id: 'corner', label: '预设圆角类型：', control: <Dropdown id="corner" value="" drawing={<ArcPreview />} /> },
    { id: 'radius', label: '圆角大小：', control: <Spinner id="radius" value="0.00 mm" /> },
    { id: 'start', label: '起点类型：', control: <Dropdown id="start" value="00" end drawing={<LinePreview />} /> },
    { id: 'startSize', label: '起点大小：', control: <Dropdown id="startSize" value="中等" /> },
    { id: 'end', label: '终点类型：', control: <Dropdown id="end" value="00" end drawing={<LinePreview />} /> },
];

const SLIDER =
    'h-1 appearance-none rounded-full outline-none [&::-webkit-slider-thumb]:size-3 [&::-webkit-slider-thumb]:appearance-none [&::-webkit-slider-thumb]:rounded-full [&::-webkit-slider-thumb]:border-2 [&::-webkit-slider-thumb]:border-[#c2c2c2] [&::-webkit-slider-thumb]:bg-white';

const SliderField = ({ id, label, min, max, value }) => (
    <>
        <label htmlFor={id} className="flex h-[34px] items-center">
            {label}
        </label>
        <div className="flex h-8 items-center justify-between pb-[3px]">
            <input id={id} type="range" min={min} max={max} defaultValue={value} className={`w-[134px] bg-[#cbcbcb] ${SLIDER}`} />
            <Spinner id={`${id}Value`} label={label} value={`${value} %`} className="w-[60px]" />
        </div>
    </>
);

const PropertyPanel = () => (
    <aside className="flex w-[283px] shrink-0 flex-col overflow-hidden border-l border-[#cfcfcf]">
        <div className="flex h-[31px] shrink-0 text-xs text-black">
            <button className="flex-1 rounded-br-md bg-[#dadada]">填充</button>
            <button className="flex-1 font-bold">线条</button>
            <button className="flex-1 rounded-bl-md bg-[#dadada]">阴影</button>
        </div>
        <div className="flex min-h-0 flex-1">
            <div className="flex-1 overflow-hidden pt-[7px] pr-5 pl-5 text-xs text-[#777]">
                {RADIOS.map((r) => (
                    <label key={r} className="flex h-[37px] items-center gap-[3px]">
                        <input
                            type="radio"
                            name="lineKind"
                            defaultChecked={r === '实线'}
                            className="size-[13px] appearance-none rounded-full border-4 border-white bg-white shadow-[0_0_1px_#ccc] checked:bg-[#aaa]"
                        />
                        {r}
                    </label>
                ))}
                <div className="mt-[9px] flex h-[34px] items-center justify-between">
                    <span id="lineColor">颜色：</span>
                    <button aria-labelledby="lineColor" className="h-6 w-[60px] rounded-xs border border-[#d8d8d8] bg-white p-[3px]">
                        <span className="block h-full rounded-xs bg-[#dadada]" />
                    </button>
                </div>
                <SliderField id="light" label="亮度：" min={-100} max={100} value={-90} />
                <SliderField id="alpha" label="透明度：" min={0} max={100} value={0} />
                {FIELDS.map((f) => (
                    <div key={f.id} className="flex h-[34px] items-center justify-between">
                        <label htmlFor={f.id}>{f.label}</label>
                        {f.control}
                    </div>
                ))}
            </div>
            <div className="w-2 shrink-0 bg-[#ececec]">
                <div className="h-[524px] rounded-full bg-[#d3d3d3]" />
            </div>
        </div>
    </aside>
);

/* ---------- Status bar ---------- */

const StatusBar = () => (
    <footer className="flex h-[35px] shrink-0 items-center border-t border-[#cfcfcf] pl-[19px] text-xs text-[#222]">
        <button aria-label="页面视图" className="mr-[25px] text-[#3a3a3a]">
            <Svg w={22} h={12}>
                <path d="M1 0.500v11M21 0.500v11" />
                <rect x="5" y="1" width="12" height="10" rx="1" strokeWidth="2" />
            </Svg>
        </button>
        <div className="relative mr-1.5 w-[98px]">
            <select aria-label="页面" className="h-6 w-full appearance-none text-xs">
                <option>页-1</option>
            </select>
            <Caret className="pointer-events-none absolute top-[10px] right-0 text-[#666]" />
        </div>
        <div className="h-6 w-px bg-[#d8d8d8]" />
        <button className="ml-7 font-bold text-black">页-1</button>
        <button aria-label="添加页面" className="ml-[34px] text-[#333]">
            <Svg w={12} sw={2}>
                <path d="M6 1v10M1 6h10" />
            </Svg>
        </button>
        <div className="ml-auto flex items-center pr-[29px] text-[#333]">
            <button aria-label="播放" className="mr-2.5">
                <Svg w={18} sw={2}>
                    <circle cx="9" cy="9" r="7.5" />
                    <path d="M6.500 5.500v7l6-3.500z" fill="currentColor" stroke="none" className="text-[#777]" />
                </Svg>
            </button>
            <button aria-label="缩小" className="mr-[7px]">
                <Svg w={10} sw={2}>
                    <path d="M0 5h10" />
                </Svg>
            </button>
            <input
                aria-label="缩放"
                type="range"
                defaultValue={23}
                className={`mr-2 w-[81px] bg-[linear-gradient(to_right,#bdbdbd_27%,#e0e0e0_27%)] ${SLIDER}`}
            />
            <button aria-label="放大" className="mr-[13px]">
                <Svg w={10} sw={2}>
                    <path d="M5 0v10M0 5h10" />
                </Svg>
            </button>
            <button className="mr-[19px] flex items-center gap-1.5 text-[#222]">
                100%
                <Caret className="text-[#777]" />
            </button>
            <button aria-label="全屏" className="mr-2">
                <Svg w={16} sw={2}>
                    <path d="M1 5V1h4M11 1h4v4M15 11v4h-4M5 15H1v-4" />
                </Svg>
            </button>
            <button aria-label="适应宽度">
                <Svg w={16} sw={2}>
                    <rect x="1" y="1" width="14" height="14" />
                    <path d="M4 8h8M6 5.500L3.500 8 6 10.500M10 5.500L12.500 8 10 10.500" strokeWidth="1.4" />
                </Svg>
            </button>
        </div>
    </footer>
);

const App = () => (
    <div className="flex h-screen flex-col overflow-hidden bg-[#f3f3f3] font-['Noto_Sans','Noto_Sans_CJK_SC',sans-serif]">
        <Header />
        <div className="flex min-h-0 flex-1 flex-col border-x-2 border-b-2 border-[#dedede]">
            <Ribbon />
            <div className="flex min-h-0 flex-1">
                <Library />
                <Canvas />
                <Strip />
                <PropertyPanel />
            </div>
            <StatusBar />
        </div>
    </div>
);

export default App;
